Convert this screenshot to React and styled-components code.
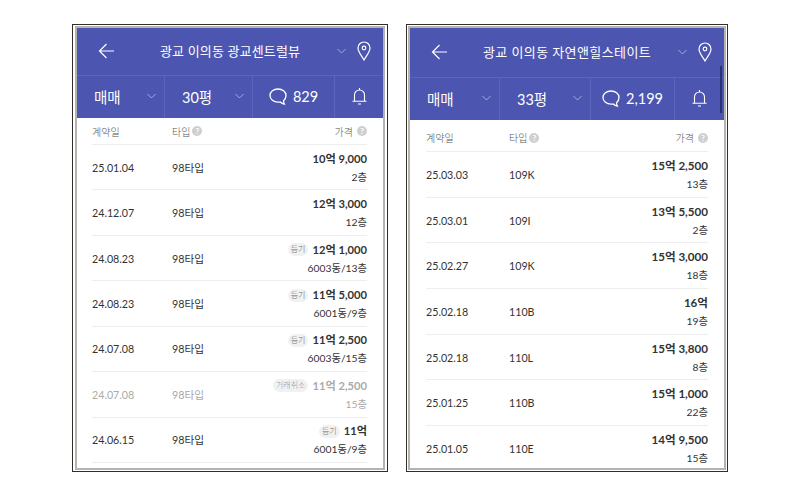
import styled, { createGlobalStyle } from "styled-components";

const GlobalStyle = createGlobalStyle`
  html, body {
    margin: 0;
    background: #fff;
    font-family: Lato, "Noto Sans CJK KR", sans-serif;
  }
`;

const left = {
  width: 316,
  framePad: 2,
  title: "광교 이의동 광교센트럴뷰",
  titleLeft: 83,
  titleSpacing: 0.15,
  headH: 47,
  area: "30평",
  talk: "829",
  cols: [88, 88, 82],
  tableHead: 27,
  headPad: 0,
  marginL: 15,
  marginR: 16,
  dateW: 80,
  priceSize: 11.2,
  rowH: 45.45,
  rows: [
    ["25.01.04", "98타입", "10억 9,000", "2층"],
    ["24.12.07", "98타입", "12억 3,000", "12층"],
    ["24.08.23", "98타입", "12억 1,000", "6003동/13층", "등기"],
    ["24.08.23", "98타입", "11억 5,000", "6001동/9층", "등기"],
    ["24.07.08", "98타입", "11억 2,500", "6003동/15층", "등기"],
    ["24.07.08", "98타입", "11억 2,500", "15층", "거래취소", true],
    ["24.06.15", "98타입", "11억", "6001동/9층", "등기"],
  ],
};

const right = {
  width: 322,
  framePad: 1,
  title: "광교 이의동 자연앤힐스테이트",
  titleLeft: 73,
  titleSpacing: 0.4,
  headH: 49,
  area: "33평",
  talk: "2,199",
  cols: [90, 91, 84],
  tableHead: 32,
  headPad: 4,
  marginL: 16,
  marginR: 16,
  dateW: 83,
  priceSize: 11.6,
  rowH: 45.7,
  scroll: true,
  rows: [
    ["25.03.03", "109K", "15억 2,500", "13층"],
    ["25.03.01", "109I", "13억 5,500", "2층"],
    ["25.02.27", "109K", "15억 3,000", "18층"],
    ["25.02.18", "110B", "16억", "19층"],
    ["25.02.18", "110L", "15억 3,800", "8층"],
    ["25.01.25", "110B", "15억 1,000", "22층"],
    ["25.01.05", "110E", "14억 9,500", "15층"],
  ],
};

function BackIcon() {
  return (
    <svg width="17" height="16" viewBox="0 0 17 16" fill="none" stroke="#fff" strokeWidth="1.2">
      <path d="M16 8H1.500M8.500 1L1.500 8l7 7" />
    </svg>
  );
}

function Chevron() {
  return (
    <svg width="9" height="6" viewBox="0 0 9 6" fill="none" stroke="#a4abdd" strokeWidth="1">
      <path d="M.5 1l4 4 4-4" />
    </svg>
  );
}

function PinIcon() {
  return (
    <svg width="14" height="20" viewBox="0 0 14 20" fill="none" stroke="#fff" strokeWidth="1.2">
      <path d="M7 19C4.500 14.500 1 11 1 7a6 6 0 0 1 12 0C13 11 9.500 14.500 7 19z" />
      <circle cx="7" cy="7" r="1.800" />
    </svg>
  );
}

function TalkIcon() {
  return (
    <svg width="18" height="17" viewBox="0 0 18 17" fill="none" stroke="#fff" strokeWidth="1.300">
      <path d="M9 1c4.400 0 8 2.700 8 6.500 0 2.300-1 4-2.500 5.200.1 1.400.3 2.400.8 3.300-1.700-.3-3-1-4-2-.7.2-1.500.2-2.300.2-4.400 0-8-3-8-6.700S4.600 1 9 1z" />
    </svg>
  );
}

function BellIcon() {
  return (
    <svg width="15" height="17" viewBox="0 0 15 17" fill="none" stroke="#fff" strokeWidth="1.100">
      <path d="M7.500 0v2M2.500 13V7a5 5 0 0 1 10 0v6M.5 13.300h14M6 16h3" />
    </svg>
  );
}

function Phone({ data }) {
  return (
    <Frame $width={data.width} $pad={data.framePad}>
      <Screen>
        <TitleBar $height={data.headH}>
          <BackSlot $width={data.titleLeft - 21}><BackIcon /></BackSlot>
          <Title $spacing={data.titleSpacing}>{data.title}</Title>
          <TitleTools>
            <Chevron />
            <PinIcon />
          </TitleTools>
        </TitleBar>
        <FilterBar>
          <FilterCell $width={data.cols[0]}>
            <FilterText>매매</FilterText>
            <Chevron />
          </FilterCell>
          <FilterCell $width={data.cols[1]}>
            <FilterText>{data.area}</FilterText>
            <Chevron />
          </FilterCell>
          <TalkCell $width={data.cols[2]}>
            <TalkIcon />
            <FilterText>{data.talk}</FilterText>
          </TalkCell>
          <BellCell>
            <BellIcon />
          </BellCell>
        </FilterBar>
        {data.scroll && <ScrollThumb />}
        <TableHead $height={data.tableHead} $top={data.headPad} $l={data.marginL} $r={data.marginR}>
          <DateCol $width={data.dateW}>계약일</DateCol>
          <TypeCol>
            타입 <HelpDot>?</HelpDot>
          </TypeCol>
          <PriceHead>
            가격 <HelpDot>?</HelpDot>
          </PriceHead>
        </TableHead>
        {data.rows.map((row, i) => (
          <Row key={i} $height={data.rowH} $muted={row[5]} $l={data.marginL} $r={data.marginR}>
            <DateCol $width={data.dateW}>{row[0]}</DateCol>
            <TypeCol>{row[1]}</TypeCol>
            <PriceCol>
              <PriceLine>
                {row[4] && <Badge $muted={row[5]}>{row[4]}</Badge>}
                <Price $size={data.priceSize}>{row[2]}</Price>
              </PriceLine>
              <Floor>{row[3]}</Floor>
            </PriceCol>
          </Row>
        ))}
      </Screen>
    </Frame>
  );
}

export default function App() {
  return (
    <>
      <GlobalStyle />
      <Page>
        <Phone data={left} />
        <Phone data={right} />
      </Page>
    </>
  );
}

const Page = styled.div`
  width: 800px;
  height: 500px;
  box-sizing: border-box;
  padding: 24px 0 0 72px;
  display: flex;
  gap: 18px;
  align-items: flex-start;
  overflow: hidden;
`;

const Frame = styled.div`
  width: ${(props) => props.$width}px;
  height: 448px;
  box-sizing: border-box;
  border: 1px solid #332d2a;
  padding: 1px ${(props) => props.$pad}px;
  background: #fff;
  display: flex;
`;

const Screen = styled.div`
  position: relative;
  flex: 1;
  min-width: 0;
  border: 2px solid #b5b3b0;
  overflow: hidden;
  background: #fff;
`;

const TitleBar = styled.div`
  height: ${(props) => props.$height}px;
  box-sizing: border-box;
  background: #4c55b0;
  display: flex;
  align-items: center;
  padding: 0 12px 2px 21px;
`;

const BackSlot = styled.div`
  width: ${(props) => props.$width}px;
  display: flex;
`;

const Title = styled.div`
  flex: 1;
  color: #fff;
  font-size: 13px;
  font-weight: 400;
  letter-spacing: ${(props) => props.$spacing}px;
  white-space: nowrap;
`;

const TitleTools = styled.div`
  display: flex;
  align-items: center;
  gap: 11px;
`;

const FilterBar = styled.div`
  height: 43px;
  background: #4c55b0;
  border-top: 1px solid #5c65bb;
  box-sizing: border-box;
  display: flex;
`;

const FilterCell = styled.div`
  width: ${(props) => props.$width}px;
  box-sizing: border-box;
  border-right: 1px solid #5c65bb;
  display: flex;
  align-items: center;
  justify-content: space-between;
  padding: 0 8px 2px 17px;
`;

const FilterText = styled.span`
  color: #fff;
  font-size: 14.500px;
  font-weight: 400;
  white-space: nowrap;
`;

const TalkCell = styled.div`
  width: ${(props) => props.$width}px;
  box-sizing: border-box;
  border-right: 1px solid #5c65bb;
  display: flex;
  align-items: center;
  justify-content: center;
  gap: 6px;
  padding-bottom: 2px;
`;

const BellCell = styled.div`
  flex: 1;
  display: flex;
  align-items: center;
  justify-content: center;
  padding-bottom: 2px;
`;

const ScrollThumb = styled.div`
  position: absolute;
  top: 38px;
  right: 2px;
  width: 2px;
  height: 47px;
  background: #2a3270;
`;

const TableHead = styled.div`
  height: ${(props) => props.$height}px;
  margin: 0 ${(props) => props.$r}px 0 ${(props) => props.$l}px;
  padding-top: ${(props) => props.$top}px;
  box-sizing: border-box;
  border-bottom: 1px solid #eeeeee;
  display: flex;
  align-items: center;
  color: #555;
  font-size: 10px;
  font-weight: 300;
`;

const Row = styled.div`
  height: ${(props) => props.$height}px;
  margin: 0 ${(props) => props.$r}px 0 ${(props) => props.$l}px;
  box-sizing: border-box;
  border-bottom: 1px solid #eeeeee;
  display: flex;
  align-items: center;
  font-size: 10.700px;
  color: ${(props) => (props.$muted ? "#aaaaaa" : "#333333")};
`;

const DateCol = styled.div`
  width: ${(props) => props.$width}px;
`;

const TypeCol = styled.div`
  width: 90px;
  display: flex;
  align-items: center;
  gap: 2px;
`;

const PriceHead = styled.div`
  flex: 1;
  display: flex;
  justify-content: flex-end;
  align-items: center;
  gap: 4px;
`;

const HelpDot = styled.span`
  width: 10px;
  height: 10px;
  border-radius: 50%;
  background: #cfcfcf;
  color: #fff;
  font-size: 8px;
  font-weight: 700;
  line-height: 10px;
  text-align: center;
`;

const PriceCol = styled.div`
  flex: 1;
  display: flex;
  flex-direction: column;
  align-items: flex-end;
  gap: 3px;
`;

const PriceLine = styled.div`
  display: flex;
  align-items: center;
  gap: 4px;
  line-height: 16px;
`;

const Price = styled.span`
  font-size: ${(props) => props.$size}px;
  font-weight: 700;
`;

const Badge = styled.span`
  background: #f1f1f1;
  border-radius: 7px;
  padding: 0 3px;
  font-size: 8px;
  font-weight: 300;
  line-height: 13px;
  color: ${(props) => (props.$muted ? "#999" : "#666")};
`;

const Floor = styled.span`
  font-size: 10.300px;
  line-height: 14px;
`;
